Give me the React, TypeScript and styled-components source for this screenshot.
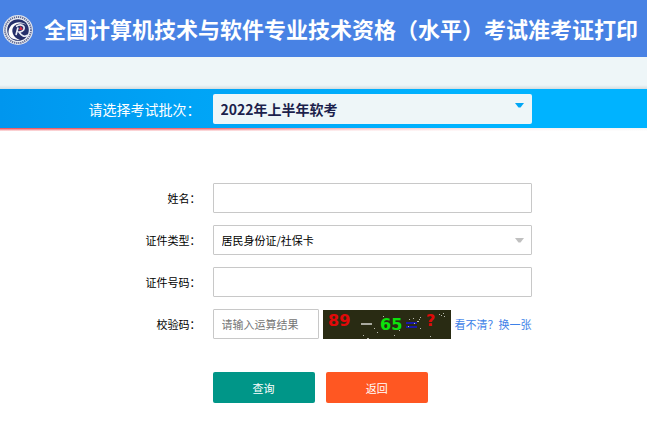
import React from "react";
import styled, { createGlobalStyle } from "styled-components";

const GlobalStyle = createGlobalStyle`
  * { box-sizing: border-box; }
  body {
    margin: 0;
    background: #fff;
    color: #000;
    font-family: "Noto Sans CJK SC", sans-serif;
    font-size: 11px;
    line-height: 16px;
  }
  button, input, select { font: inherit; }
`;

const Header = styled.header`
  display: flex;
  align-items: center;
  gap: 10px;
  height: 57px;
  padding: 0 0 2px 2px;
  background: #4882e4;
  color: #fff;
  overflow: hidden;
`;

const Logo = styled.svg`
  flex: none;
  width: 32px;
  height: 32px;
  margin-top: 4px;
`;

const Title = styled.h1`
  margin: 0;
  font-size: 22px;
  line-height: 32px;
  font-weight: 700;
  white-space: nowrap;
`;

const Strip = styled.div`
  height: 32px;
  background: linear-gradient(#eef6f8 28px, #d4dde0);
`;

const fieldGrid = `
  display: grid;
  grid-template-columns: 31% 49.3%;
  column-gap: 12px;
  align-items: center;
`;

const BatchBar = styled.section`
  ${fieldGrid}
  height: 39px;
  background: linear-gradient(90deg, #0096ee, #00a4f6 30%, #00b3ff 70%);
`;

const BatchLabel = styled.label`
  color: #fff;
  font-size: 14px;
  line-height: 20px;
  text-align: right;
`;

const Accent = styled.div`
  height: 3px;
  background:
    linear-gradient(rgba(255, 255, 255, 0), rgba(255, 255, 255, 0.9)),
    linear-gradient(90deg, #ed3f48, #f0555c 32%, #f8b8bb 55%, #fdeff0 80%, #f5f5f5);
`;

const SelectWrap = styled.div`
  position: relative;
`;

const Select = styled.select<{ $batch?: boolean }>`
  appearance: none;
  display: block;
  width: 100%;
  height: 30px;
  padding: 0 24px 0 8px;
  border: ${(p) => (p.$batch ? "0" : "1px solid #c8c8c8")};
  border-radius: ${(p) => (p.$batch ? "2px" : "1px")};
  background: ${(p) => (p.$batch ? "#eef6f8" : "#fff")};
  color: ${(p) => (p.$batch ? "#1c1f4c" : "#000")};
  font-size: ${(p) => (p.$batch ? "14px" : "11px")};
  font-weight: ${(p) => (p.$batch ? 700 : 400)};
`;

const Arrow = styled.svg<{ $batch?: boolean }>`
  position: absolute;
  right: 8px;
  top: ${(p) => (p.$batch ? "9px" : "13px")};
  width: 9px;
  height: 5px;
  fill: ${(p) => (p.$batch ? "#00a6f5" : "#c0c0c0")};
  pointer-events: none;
`;

const Form = styled.form`
  display: flex;
  flex-direction: column;
  gap: 12px;
  padding: 52px 0 22px;
`;

const Row = styled.div<{ $actions?: boolean }>`
  ${fieldGrid}
  margin-top: ${(p) => (p.$actions ? "21px" : "0")};
`;

const Label = styled.label`
  text-align: right;
`;

const Input = styled.input`
  width: 100%;
  min-width: 0;
  height: 30px;
  padding: 0 8px;
  border: 1px solid #c8c8c8;
  border-radius: 1px;
  background: #fff;
  color: #000;
  &::placeholder { color: #757575; opacity: 1; }
`;

const CaptchaGroup = styled.div`
  display: grid;
  grid-template-columns: minmax(0, 1fr) 128px auto;
  column-gap: 4px;
  align-items: center;
`;

const Captcha = styled.svg`
  display: block;
  width: 128px;
  height: 29px;
`;

const Refresh = styled.a`
  color: #3e82e8;
  text-decoration: none;
  white-space: nowrap;
`;

const Actions = styled.div`
  grid-column: 2;
  display: flex;
  gap: 11px;
`;

const Button = styled.button<{ $tone: string }>`
  width: 32%;
  height: 31px;
  padding: 0;
  border: 0;
  border-radius: 2px;
  background: ${(p) => p.$tone};
  color: #fff;
`;

const specks = [
  [60, 6], [51, 18], [40, 25], [44, 28], [45, 28], [54, 22], [71, 25], [76, 20],
  [86, 9], [90, 8], [94, 11], [95, 11], [96, 9], [97, 7], [97, 18], [107, 26],
  [116, 4], [118, 5], [121, 6], [120, 3], [91, 13], [85, 16],
];

function Emblem() {
  return (
    <Logo viewBox="0 0 32 32" aria-hidden="true">
      <circle cx="16" cy="16" r="15" fill="#dfe3ec" />
      <circle cx="16" cy="16" r="13" fill="none" stroke="#5c6590" strokeWidth="1.8" strokeDasharray="1.2 0.9" />
      <circle cx="16" cy="16" r="11.6" fill="#f3f5f9" />
      <circle cx="16" cy="16" r="10.8" fill="#25306a" />
      <path d="M6.5 19C6 9 18 5 24.5 11C16 7 8 12 11 20C12 23 15 25 18 26C12 26 7 24 6.5 19Z" fill="#fff" />
      <path d="M14 12.5C19 9 24 12 21.5 16C20 18 18 18 17 18C19 21 22 24 26 21M16 13.5L14 21" fill="none" stroke="#e9ecf4" strokeWidth="1.7" />
      <path d="M18.5 12l2.6 3.4-4.2.8z" fill="#d42b43" />
    </Logo>
  );
}

function DownArrow({ batch }: { batch?: boolean }) {
  return (
    <Arrow $batch={batch} viewBox="0 0 9 5" aria-hidden="true">
      <path d="M0 0H9L5.5 4.4H3.5Z" />
    </Arrow>
  );
}

function CaptchaImage() {
  return (
    <Captcha viewBox="0 0 128 29" role="img" aria-label="89 - 65 = ?">
      <rect width="128" height="29" fill="#292b13" />
      <g fontFamily='"DejaVu Sans", sans-serif' fontWeight="700" fontSize="16">
        <text x="5" y="16" fill="#e10909">89</text>
        <text x="57" y="20" fill="#0ce20c">65</text>
        <text x="103" y="16" fill="#e10909">?</text>
      </g>
      <rect x="38" y="13" width="11" height="2" fill="#a9aaa0" />
      <rect x="83" y="12" width="11" height="2" fill="#1818a8" />
      <rect x="83" y="16" width="11" height="2" fill="#1818a8" />
      {specks.map(([x, y]) => (
        <rect key={`${x}-${y}`} x={x} y={y} width="1" height="1" fill="#b9bab0" />
      ))}
    </Captcha>
  );
}

export default function App() {
  return (
    <>
      <GlobalStyle />
      <Header>
        <Emblem />
        <Title>全国计算机技术与软件专业技术资格（水平）考试准考证打印</Title>
      </Header>
      <Strip />
      <main>
        <BatchBar>
          <BatchLabel htmlFor="batch">请选择考试批次：</BatchLabel>
          <SelectWrap>
            <Select id="batch" $batch>
              <option>2022年上半年软考</option>
            </Select>
            <DownArrow batch />
          </SelectWrap>
        </BatchBar>
        <Accent />
        <Form onSubmit={(e) => e.preventDefault()}>
          <Row>
            <Label htmlFor="name">姓名：</Label>
            <Input id="name" />
          </Row>
          <Row>
            <Label htmlFor="id-type">证件类型：</Label>
            <SelectWrap>
              <Select id="id-type">
                <option>居民身份证/社保卡</option>
              </Select>
              <DownArrow />
            </SelectWrap>
          </Row>
          <Row>
            <Label htmlFor="id-number">证件号码：</Label>
            <Input id="id-number" />
          </Row>
          <Row>
            <Label htmlFor="code">校验码：</Label>
            <CaptchaGroup>
              <Input id="code" placeholder="请输入运算结果" />
              <CaptchaImage />
              <Refresh href="#code">看不清？换一张</Refresh>
            </CaptchaGroup>
          </Row>
          <Row $actions>
            <Actions>
              <Button type="submit" $tone="#009688">查询</Button>
              <Button type="button" $tone="#ff5722">返回</Button>
            </Actions>
          </Row>
        </Form>
      </main>
    </>
  );
}
